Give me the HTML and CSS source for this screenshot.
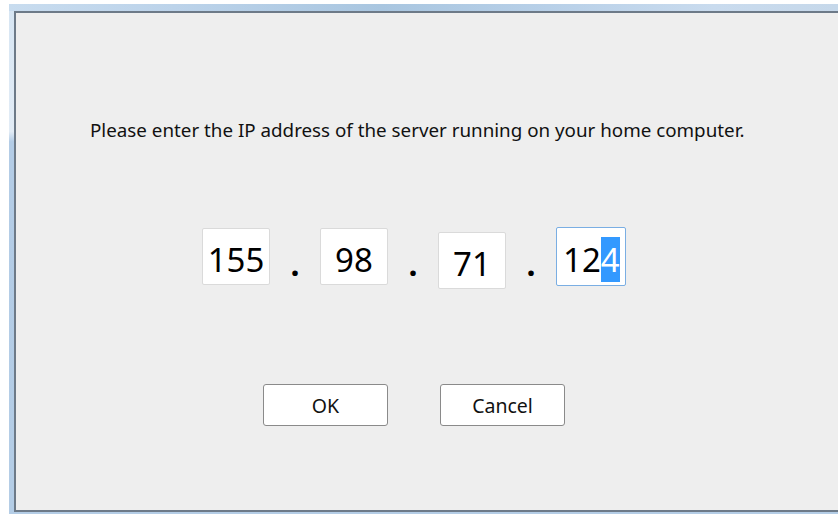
FILE: index.html
```html
<!DOCTYPE html>
<html lang="en">
<head>
<meta charset="utf-8">
<title>Server address</title>
<link rel="stylesheet" href="styles.css">
</head>
<body>
<div class="frame">
  <div class="panel">
    <p class="prompt">Please enter the IP address of the server running on your home computer.</p>
    <div class="ip">
      <div class="octet">155</div>
      <span class="dot">.</span>
      <div class="octet">98</div>
      <span class="dot">.</span>
      <div class="octet octet-low">71</div>
      <span class="dot">.</span>
      <div class="octet octet-focus">12<span class="sel">4</span></div>
    </div>
    <div class="actions">
      <button class="btn" type="button">OK</button>
      <button class="btn" type="button">Cancel</button>
    </div>
  </div>
</div>
</body>
</html>
```
FILE: styles.css
```css
html, body {
  margin: 0;
  padding: 0;
  background: #ffffff;
  width: 838px;
  height: 514px;
  overflow: hidden;
}

/* Aero-style window edge: pale blue glass on top and left */
.frame {
  margin: 4px 0 0 9px;
  height: 510px;
  box-sizing: border-box;
  padding: 7px 0 2px 5px;
  background:
    linear-gradient(90deg, #c8dcef 0%, #bcd3ea 20%, #a9c6e0 45%, #b8d0e8 65%, #c9dbee 85%, #c6d8ea 100%) top / 100% 7px no-repeat,
    linear-gradient(180deg, #d6e5f3 0%, #e2ecf6 25%, #b3cce6 27%, #b4cde6 100%);
}

.panel {
  height: 100%;
  box-sizing: border-box;
  background: #eeeeee;
  border-top: 2px solid #6d7a88;
  border-left: 2px solid #6d7a88;
  border-bottom: 2px solid #6d7a88;
  font-family: "Noto Sans", "Open Sans", sans-serif;
  color: #111111;
  display: flex;
  flex-direction: column;
}

.prompt {
  margin: 105px 0 0 74px;
  font-size: 18.8px;
  line-height: 24px;
  white-space: nowrap;
}

.ip {
  display: flex;
  align-items: flex-start;
  margin: 86px 0 0 186px;
}

.octet {
  width: 68px;
  height: 57px;
  box-sizing: border-box;
  background: #ffffff;
  border: 1px solid #dadada;
  border-radius: 2px;
  font-size: 33px;
  line-height: 55px;
  padding-top: 3px;
  text-align: center;
  color: #000000;
  white-space: nowrap;
}

.octet-low {
  margin-top: 4px;
}

.octet-focus {
  width: 70px;
  margin-top: -1px;
  height: 59px;
  line-height: 57px;
  border-color: #7aaee3;
  text-align: left;
  padding-left: 6px;
}

.sel {
  background: #3399ff;
  color: #ffffff;
}

.dot {
  width: 50px;
  text-align: center;
  font-size: 32px;
  line-height: 32px;
  margin-top: 20px;
  font-weight: bold;
  color: #000000;
}

.actions {
  display: flex;
  gap: 52px;
  margin: 95px 0 0 247px;
}

.btn {
  width: 125px;
  height: 42px;
  background: #ffffff;
  border: 1px solid #8a8a8a;
  border-radius: 3px;
  font-family: "Noto Sans", "Open Sans", sans-serif;
  font-size: 19.5px;
  color: #111111;
  padding: 0;
}
```
